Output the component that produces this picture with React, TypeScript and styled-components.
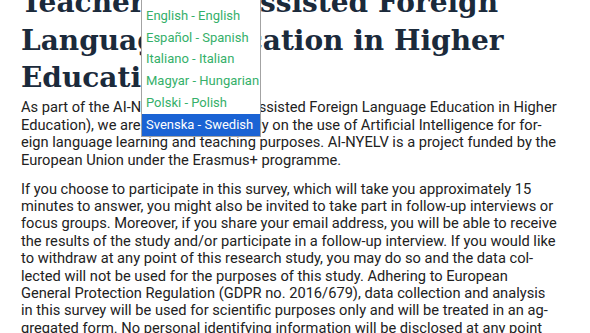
import React from "react";
import styled, { createGlobalStyle } from "styled-components";

const GlobalStyle = createGlobalStyle`
  *, *::before, *::after {
    box-sizing: border-box;
  }
  html, body {
    margin: 0;
    padding: 0;
    background: #ffffff;
    overflow: hidden;
  }
`;

const languages = [
  "Deutsch - German",
  "English - English",
  "Español - Spanish",
  "Italiano - Italian",
  "Magyar - Hungarian",
  "Polski - Polish",
  "Svenska - Swedish",
];

function App() {
  const selected = "Svenska - Swedish";

  return (
    <>
      <GlobalStyle />
      <Page lang="en">
        <Title>
          Teacher &amp; AI–Assisted Foreign
          <br />
          Language Education in Higher
          <br />
          Education
        </Title>
        <Paragraph>
          As part of the AI-NYELV project (AI-Assisted Foreign Language
          Education in Higher Education), we are focussing primarily on the use
          of Artificial Intelligence for for{"\u00AD"}eign language learning and
          teaching purposes. AI-NYELV is a project funded by the European Union
          under the Erasmus+ programme.
        </Paragraph>
        <Paragraph>
          If you choose to participate in this survey, which will take you
          approximately 15 minutes to answer, you might also be invited to take
          part in follow-up interviews or focus groups. Moreover, if you share
          your email address, you will be able to receive the results of the
          study and/or participate in a follow-up interview. If you would like
          to withdraw at any point of this research study, you may do so and the
          data col{"\u00AD"}lected will not be used for the purposes of this
          study. Adhering to European General Protection Regulation (GDPR no.
          2016/679), data collection and analysis in this survey will be used
          for scientific purposes only and will be treated in an ag{"\u00AD"}
          gregated form. No personal identifying information will be disclosed
          at any point during the research.
        </Paragraph>

        <LanguageList role="listbox">
          {languages.map((lang) => (
            <LanguageOption
              key={lang}
              role="option"
              aria-selected={lang === selected}
              $active={lang === selected}
            >
              {lang}
            </LanguageOption>
          ))}
        </LanguageList>
      </Page>
    </>
  );
}

export default App;

const Page = styled.div`
  position: relative;
  width: 100%;
  height: 333px;
  overflow: hidden;
  padding: 0 21px;
  color: #222222;
  font-family: Roboto, "Liberation Sans", sans-serif;
`;

const Title = styled.h1`
  margin: -16px 0 0;
  font-family: "DejaVu Serif", serif;
  font-weight: 700;
  font-size: 28px;
  line-height: 37.5px;
  white-space: nowrap;
  color: #1b2a3b;
`;

const Paragraph = styled.p`
  width: 539.6px;
  margin: 2.8px 0 11.7px;
  font-size: 14.67px;
  line-height: 17.4px;
  hyphens: manual;
`;

const LanguageList = styled.ul`
  position: absolute;
  left: 141px;
  top: -18px;
  width: 120px;
  margin: 0;
  padding: 0;
  list-style: none;
  background: #ffffff;
  border: 1px solid #a3a3a3;
  font-family: Roboto, "Liberation Sans", sans-serif;
  font-size: 13px;
`;

const LanguageOption = styled.li<{ $active?: boolean }>`
  height: 21.8px;
  line-height: 21.8px;
  padding: 0 0 0 4px;
  white-space: nowrap;
  color: ${(p) => (p.$active ? "#ffffff" : "#35b06a")};
  background: ${(p) => (p.$active ? "#1a63d4" : "transparent")};
`;
